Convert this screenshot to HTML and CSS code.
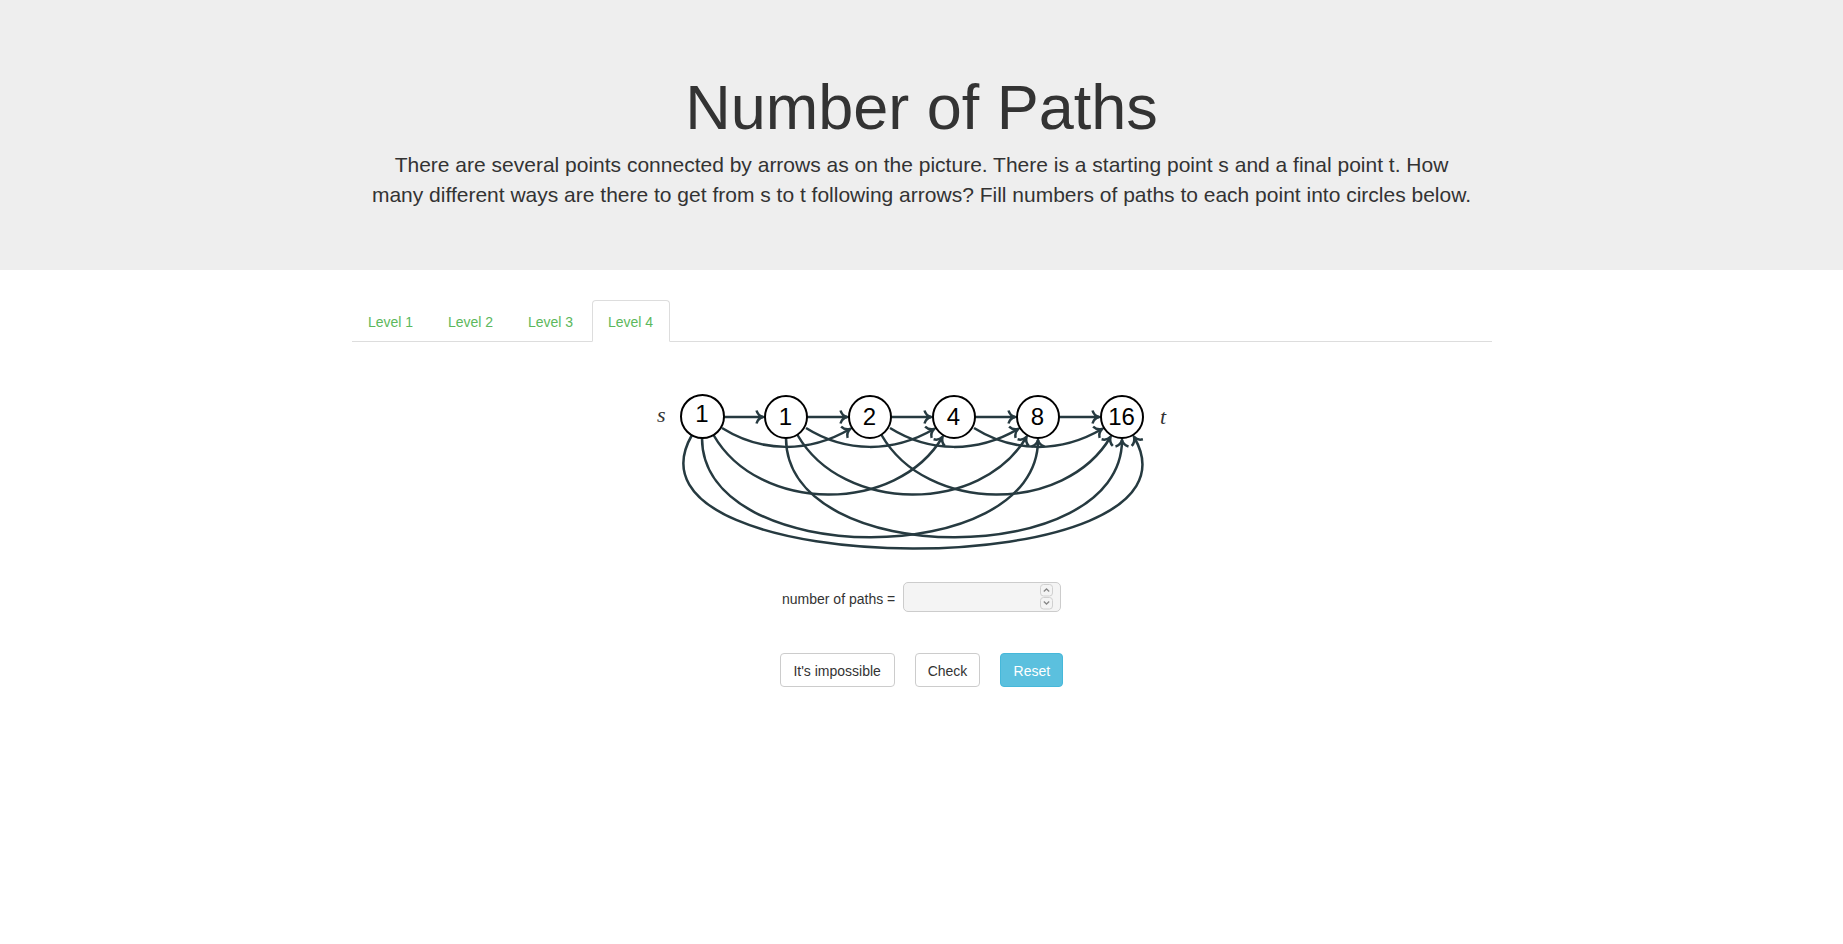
FILE: index.html
```html
<!DOCTYPE html>
<html lang="en">
<head>
<meta charset="utf-8">
<title>Number of Paths</title>
<link rel="stylesheet" href="styles.css">
</head>
<body>
<header class="jumbotron">
  <div class="container">
    <h1>Number of Paths</h1>
    <p>There are several points connected by arrows as on the picture. There is a starting point s and a final point t. How<br> many different ways are there to get from s to t following arrows? Fill numbers of paths to each point into circles below.</p>
  </div>
</header>
<main class="container">
  <nav class="tabs">
    <a class="tab" href="#level1">Level 1</a>
    <a class="tab" href="#level2">Level 2</a>
    <a class="tab" href="#level3">Level 3</a>
    <a class="tab active" href="#level4" aria-current="page">Level 4</a>
  </nav>
  <div class="graph">
    <svg class="edges" width="562" height="190" viewBox="0 0 562 190" aria-hidden="true">
      <defs>
        <marker id="head" markerUnits="userSpaceOnUse" markerWidth="20" markerHeight="20" viewBox="-10 -10 20 20" orient="auto">
          <path class="edge" d="M-6.500 -6.500C-5.500 -3 -3 -0.800 0 0C-3 0.800 -5.500 3 -6.500 6.500"/>
        </marker>
        <path id="hop1" class="edge" marker-end="url(#head)" d="M82 37H122"/>
        <path id="hop2" class="edge" marker-end="url(#head)" d="M81 48C121 73 168 73 209 49"/>
        <path id="hop3" class="edge" marker-end="url(#head)" d="M72.500 55C118 134 256 134 301.500 57"/>
        <path id="hop4" class="edge" marker-end="url(#head)" d="M61 58C61 190 397 190 397 60"/>
      </defs>
      <use href="#hop1"/><use href="#hop1" x="84"/><use href="#hop1" x="168"/><use href="#hop1" x="252"/><use href="#hop1" x="336"/>
      <use href="#hop2"/><use href="#hop2" x="84"/><use href="#hop2" x="168"/><use href="#hop2" x="252"/>
      <use href="#hop3"/><use href="#hop3" x="84"/><use href="#hop3" x="168"/>
      <use href="#hop4"/><use href="#hop4" x="84"/>
      <path class="edge" marker-end="url(#head)" d="M51 55C-37 206 580 206 493 57"/>
      <circle class="ring" cx="61.500" cy="36.500" r="21.500"/>
      <text class="math" x="16" y="42">s</text>
      <text class="math" x="519" y="44">t</text>
      <text class="start" x="61" y="42">1</text>
    </svg>
    <input class="node n2" type="text" value="1" aria-label="Paths to point 2">
    <input class="node n3" type="text" value="2" aria-label="Paths to point 3">
    <input class="node n4" type="text" value="4" aria-label="Paths to point 4">
    <input class="node n5" type="text" value="8" aria-label="Paths to point 5">
    <input class="node n6" type="text" value="16" aria-label="Paths to point 6">
  </div>
  <form class="answer">
    <label for="paths">number of paths =</label>
    <div class="field">
      <input id="paths" type="number">
      <svg class="spin" width="13" height="26" viewBox="0 0 13 26" aria-hidden="true">
        <rect x="0.500" y="0.500" width="12" height="11.500" rx="3"/>
        <rect x="0.500" y="13.500" width="12" height="11.500" rx="3"/>
        <path d="M3.800 7.500L6.500 5L9.200 7.500M3.800 17.500L6.500 20L9.200 17.500"/>
      </svg>
    </div>
  </form>
  <div class="actions">
    <button class="btn wide" type="button">It's impossible</button>
    <button class="btn" type="button">Check</button>
    <button class="btn info" type="button">Reset</button>
  </div>
</main>
</body>
</html>
```
FILE: styles.css
```css
* { box-sizing: border-box; }
body {
  margin: 0;
  font: 14px/20px "Helvetica Neue", Helvetica, "Liberation Sans", Arial, sans-serif;
  color: #333;
  background: #fff;
}
.container { max-width: 1170px; margin: 0 auto; padding: 0 15px; }
.jumbotron { background: #eee; padding: 48px 0; margin-bottom: 30px; text-align: center; }
.jumbotron h1 { margin: 0; padding: 25px 0 8px; font-size: 63px; line-height: 69px; font-weight: 500; }
.jumbotron p { margin: 0 0 12px; font-size: 21px; line-height: 30px; font-weight: 200; }

.tabs { display: flex; gap: 2px; border-bottom: 1px solid #ddd; }
.tab {
  min-width: 78px;
  margin-bottom: -1px;
  padding: 11px 15px 9px;
  border: 1px solid transparent;
  border-radius: 4px 4px 0 0;
  color: #5cb85c;
  text-align: center;
  text-decoration: none;
}
.tab.active { border-color: #ddd #ddd #fff; background: #fff; }

.graph { position: relative; width: 562px; height: 190px; margin: 38px auto 12px; }
.edges { display: block; }
.edge { fill: none; stroke: #263a40; stroke-width: 2.5px; }
.ring { fill: #fff; stroke: #000; stroke-width: 2px; }
.math { font: italic 22px "Liberation Serif", serif; fill: #333; }
.start { font-size: 24px; fill: #000; text-anchor: middle; }
.node {
  position: absolute;
  top: 15px;
  width: 44px;
  height: 44px;
  padding: 0;
  border: 2px solid #000;
  border-radius: 50%;
  background: #fff;
  color: #000;
  font: inherit;
  font-size: 24px;
  text-align: center;
}
.n2 { left: 123px; }
.n3 { left: 207px; }
.n4 { left: 291px; }
.n5 { left: 375px; }
.n6 { left: 459px; }

.answer { display: flex; justify-content: center; align-items: center; gap: 4px; margin-bottom: 41px; }
.answer label { min-width: 117px; padding-top: 3px; }
.field { position: relative; }
.field input {
  display: block;
  width: 158px;
  height: 30px;
  padding: 2px 24px 2px 6px;
  border: 1px solid #ccc;
  border-radius: 5px;
  background: #f4f4f4;
  font: inherit;
  appearance: textfield;
}
.spin { position: absolute; right: 8px; top: 2px; fill: #f4f4f4; stroke: #d0d0d0; pointer-events: none; }
.spin path { fill: none; stroke: #888; stroke-width: 1.3px; }

.actions { display: flex; justify-content: center; gap: 20px; }
.btn {
  height: 34px;
  padding: 2px 12px 0;
  border: 1px solid #ccc;
  border-radius: 4px;
  background: #fff;
  color: #333;
  font: inherit;
}
.btn.wide { min-width: 115px; }
.btn.info { min-width: 63px; border-color: #46b8da; background: #5bc0de; color: #fff; }
```
